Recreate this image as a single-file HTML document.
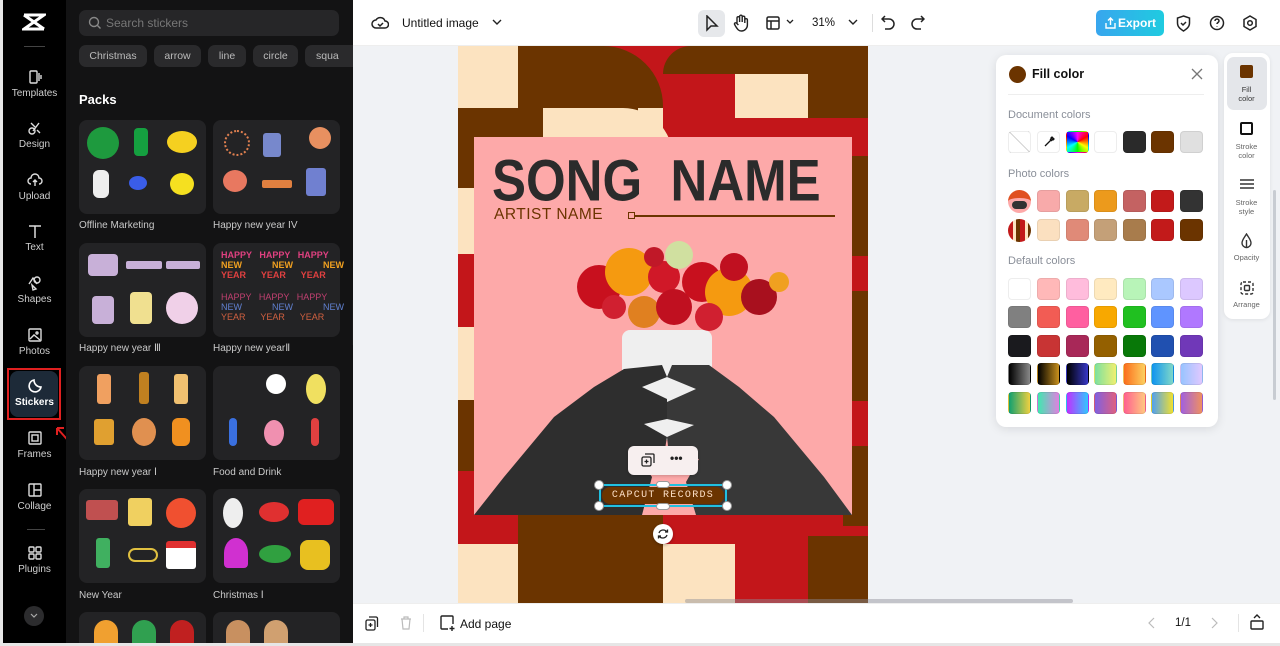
<!DOCTYPE html>
<html><head><meta charset="utf-8">
<style>
*{box-sizing:border-box;margin:0;padding:0}
html,body{width:1280px;height:646px;overflow:hidden}
body{background:#fff;font-family:"Liberation Sans",sans-serif;position:relative}
.a{position:absolute}
.rail{left:3px;top:0;width:63px;height:643px;background:#000}
.ri{position:absolute;left:0;width:63px;text-align:center;color:#cfcfcf;font-size:10px}
.ri svg{display:block;margin:0 auto 3px}
.panel{left:66px;top:0;width:287px;height:643px;background:#131314;overflow:hidden}
.chip{position:absolute;top:45px;height:22px;border-radius:7px;background:#2a2a2c;color:#bbb;font-size:10.5px;line-height:22px;text-align:center}
.card{position:absolute;width:127px;height:94px;border-radius:8px;background:#232325}
.lbl{position:absolute;color:#c9c9c9;font-size:10px}
.dot{position:absolute;border-radius:50%}
.sw{position:absolute;width:23px;height:22px;border-radius:4px;border:1px solid rgba(0,0,0,.07)}
.tt{position:absolute;color:#333;font-size:7.5px;text-align:center;width:45px;line-height:9px}
</style></head><body>
<div class="a" style="left:0;top:0;width:3px;height:646px;background:#e8e8e8"></div>
<div class="a rail">
  <svg class="a" style="left:19px;top:13px" width="24" height="18" viewBox="0 0 24 18"><path d="M2 2h20L2 16h20M2 2l20 14" stroke="#fff" stroke-width="3" fill="none"/></svg>
  <div class="a" style="left:21px;top:46px;width:21px;height:1px;background:#444"></div>
  <div class="ri" style="top:69px"><svg width="16" height="16" viewBox="0 0 16 16" fill="none" stroke="#ddd" stroke-width="1.4"><rect x="3" y="2" width="7" height="12" rx="1"/><path d="M12 4v8M14 6v4"/></svg>Templates</div>
  <div class="ri" style="top:120px"><svg width="16" height="16" viewBox="0 0 16 16" fill="none" stroke="#ddd" stroke-width="1.4"><circle cx="5" cy="11" r="3"/><path d="M4 3l4 4M12 3l-6 8M10 10l3 3"/></svg>Design</div>
  <div class="ri" style="top:172px"><svg width="16" height="16" viewBox="0 0 16 16" fill="none" stroke="#ddd" stroke-width="1.4"><path d="M4 12a3 3 0 010-6 4 4 0 018 0 3 3 0 010 6M8 8v6M6 10l2-2 2 2"/></svg>Upload</div>
  <div class="ri" style="top:223px"><svg width="16" height="16" viewBox="0 0 16 16" fill="none" stroke="#ddd" stroke-width="1.5"><path d="M2 3h12M8 3v12"/></svg>Text</div>
  <div class="ri" style="top:275px"><svg width="16" height="16" viewBox="0 0 16 16" fill="none" stroke="#ddd" stroke-width="1.4"><circle cx="10" cy="5" r="3"/><path d="M2 9l4-6 4 6M5 10l4 4-3 1z"/></svg>Shapes</div>
  <div class="ri" style="top:327px"><svg width="16" height="16" viewBox="0 0 16 16" fill="none" stroke="#ddd" stroke-width="1.4"><rect x="2" y="2" width="12" height="12" rx="1"/><path d="M3 12l4-4 6 5"/><circle cx="10" cy="6" r="1"/></svg>Photos</div>
  <div class="a" style="left:4px;top:368px;width:54px;height:52px;border:2px solid #e02020"></div>
  <div class="a" style="left:7px;top:371px;width:48px;height:46px;border-radius:8px;background:#1d2a38"></div>
  <div class="ri" style="top:378px;color:#fff;font-weight:bold"><svg width="16" height="16" viewBox="0 0 16 16" fill="none" stroke="#fff" stroke-width="1.6"><path d="M14 9a6 6 0 11-7-7c0 4 3 7 7 7z"/></svg>Stickers</div>
  <div class="ri" style="top:430px"><svg width="16" height="16" viewBox="0 0 16 16" fill="none" stroke="#ddd" stroke-width="1.4"><rect x="2" y="2" width="12" height="12" rx="1"/><rect x="5" y="5" width="6" height="6"/></svg>Frames</div>
  <div class="ri" style="top:482px"><svg width="16" height="16" viewBox="0 0 16 16" fill="none" stroke="#ddd" stroke-width="1.4"><rect x="2" y="2" width="12" height="12" rx="1"/><path d="M7 2v12M7 8h7"/></svg>Collage</div>
  <div class="a" style="left:24px;top:529px;width:18px;height:1px;background:#444"></div>
  <div class="ri" style="top:545px"><svg width="16" height="16" viewBox="0 0 16 16" fill="none" stroke="#ddd" stroke-width="1.4"><rect x="2" y="2" width="5" height="5" rx="1"/><rect x="9" y="2" width="5" height="5" rx="1"/><rect x="2" y="9" width="5" height="5" rx="1"/><rect x="9" y="9" width="5" height="5" rx="1"/></svg>Plugins</div>
  <div class="a" style="left:21px;top:606px;width:20px;height:20px;border-radius:50%;background:#2c2c2e"></div>
  <svg class="a" style="left:26px;top:612px" width="10" height="8"><path d="M2 2l3 3 3-3" stroke="#aaa" fill="none" stroke-width="1.2"/></svg>
  <svg class="a" style="left:50px;top:424px" width="22" height="24"><path d="M20 22L4 4M4 4v7M4 4h7" stroke="#e02020" stroke-width="2" fill="none"/></svg>
</div>
<div class="a panel">
  <div class="a" style="left:13px;top:10px;width:260px;height:26px;border-radius:7px;background:#262628"></div>
  <svg class="a" style="left:22px;top:16px" width="14" height="14" fill="none" stroke="#888" stroke-width="1.4"><circle cx="6" cy="6" r="4.5"/><path d="M9.5 9.5l3 3"/></svg>
  <div class="a" style="left:40px;top:16px;color:#777;font-size:12px">Search stickers</div>
  <div class="chip" style="left:13px;width:68px">Christmas</div>
  <div class="chip" style="left:88px;width:47px">arrow</div>
  <div class="chip" style="left:142px;width:38px">line</div>
  <div class="chip" style="left:187px;width:45px">circle</div>
  <div class="chip" style="left:239px;width:48px;text-align:left;padding-left:11px;border-radius:7px 0 0 7px">squa</div>
  <div class="a" style="left:13px;top:92px;color:#fff;font-size:13px;font-weight:bold">Packs</div>
  <div class="card" style="left:13px;top:120px"></div><div class="card" style="left:147px;top:120px"></div>
  <div class="lbl" style="left:13px;top:220px">Offline Marketing</div><div class="lbl" style="left:147px;top:220px">Happy new year IV</div>
  <div class="card" style="left:13px;top:243px"></div><div class="card" style="left:147px;top:243px"></div>
  <div class="lbl" style="left:13px;top:343px">Happy new year Ⅲ</div><div class="lbl" style="left:147px;top:343px">Happy new yearⅡ</div>
  <div class="card" style="left:13px;top:366px"></div><div class="card" style="left:147px;top:366px"></div>
  <div class="lbl" style="left:13px;top:467px">Happy new year Ⅰ</div><div class="lbl" style="left:147px;top:467px">Food and Drink</div>
  <div class="card" style="left:13px;top:489px"></div><div class="card" style="left:147px;top:489px"></div>
  <div class="lbl" style="left:13px;top:590px">New Year</div><div class="lbl" style="left:147px;top:590px">Christmas Ⅰ</div>
  <div class="card" style="left:13px;top:612px;height:31px;border-radius:8px 8px 0 0"></div><div class="card" style="left:147px;top:612px;height:31px;border-radius:8px 8px 0 0"></div>
  <div class="dot" style="left:21px;top:127px;width:32px;height:32px;background:#1e9a3e"></div>
  <div class="dot" style="left:68px;top:128px;width:14px;height:28px;background:#15a040;border-radius:4px"></div>
  <div class="dot" style="left:101px;top:131px;width:30px;height:22px;background:#f5d020"></div>
  <div class="dot" style="left:27px;top:170px;width:16px;height:28px;background:#eee;border-radius:6px"></div>
  <div class="dot" style="left:63px;top:176px;width:18px;height:14px;background:#3a5de8"></div>
  <div class="dot" style="left:104px;top:173px;width:24px;height:22px;background:#f5e020"></div>
  <div class="dot" style="left:158px;top:130px;width:26px;height:26px;background:none;border:2px dotted #e08050"></div>
  <div class="dot" style="left:197px;top:133px;width:18px;height:24px;background:#7788cc;border-radius:3px"></div>
  <div class="dot" style="left:243px;top:127px;width:22px;height:22px;background:#e89060"></div>
  <div class="dot" style="left:157px;top:170px;width:24px;height:22px;background:#e87860"></div>
  <div class="dot" style="left:196px;top:180px;width:30px;height:8px;background:#e08040;border-radius:2px"></div>
  <div class="dot" style="left:240px;top:168px;width:20px;height:28px;background:#7080d0;border-radius:3px"></div>
  <div class="dot" style="left:22px;top:254px;width:30px;height:22px;background:#c8b0d8;border-radius:4px"></div>
  <div class="dot" style="left:60px;top:261px;width:36px;height:8px;background:#c8b0d8;border-radius:2px"></div>
  <div class="dot" style="left:100px;top:261px;width:34px;height:8px;background:#c8b0d8;border-radius:2px"></div>
  <div class="dot" style="left:26px;top:296px;width:22px;height:28px;background:#c8b0d8;border-radius:4px"></div>
  <div class="dot" style="left:64px;top:292px;width:22px;height:32px;background:#f0e090;border-radius:4px"></div>
  <div class="dot" style="left:100px;top:292px;width:32px;height:32px;background:#f0d0e8"></div>
  <div class="a" style="left:155px;top:250px;width:116px;color:#e04080;font-size:9px;font-weight:bold;line-height:10px;word-spacing:5px;white-space:nowrap">HAPPY HAPPY HAPPY<br><span style="color:#f0a020">NEW&nbsp;&nbsp;&nbsp; NEW&nbsp;&nbsp;&nbsp; NEW</span><br><span style="color:#e04040">YEAR&nbsp; YEAR&nbsp; YEAR</span></div>
  <div class="a" style="left:155px;top:292px;width:116px;color:#c04070;font-size:9px;line-height:10px;word-spacing:5px;white-space:nowrap">HAPPY HAPPY HAPPY<br><span style="color:#6080d0">NEW&nbsp;&nbsp;&nbsp; NEW&nbsp;&nbsp;&nbsp; NEW</span><br><span style="color:#d06040">YEAR&nbsp; YEAR&nbsp; YEAR</span></div>
  <div class="dot" style="left:31px;top:374px;width:14px;height:30px;background:#f0a060;border-radius:3px"></div>
  <div class="dot" style="left:73px;top:372px;width:10px;height:32px;background:#c08020;border-radius:3px"></div>
  <div class="dot" style="left:108px;top:374px;width:14px;height:30px;background:#f0c070;border-radius:3px"></div>
  <div class="dot" style="left:28px;top:419px;width:20px;height:26px;background:#e0a030;border-radius:3px"></div>
  <div class="dot" style="left:66px;top:418px;width:24px;height:28px;background:#e09050"></div>
  <div class="dot" style="left:106px;top:418px;width:18px;height:28px;background:#f09020;border-radius:6px"></div>
  <div class="dot" style="left:200px;top:374px;width:20px;height:20px;background:#fff"></div>
  <div class="dot" style="left:240px;top:374px;width:20px;height:30px;background:#f0e060"></div>
  <div class="dot" style="left:163px;top:418px;width:8px;height:28px;background:#3a70e0;border-radius:4px"></div>
  <div class="dot" style="left:198px;top:420px;width:20px;height:26px;background:#f090b0"></div>
  <div class="dot" style="left:245px;top:418px;width:8px;height:28px;background:#e04040;border-radius:4px"></div>
  <div class="dot" style="left:20px;top:500px;width:32px;height:20px;background:#c05050;border-radius:3px"></div>
  <div class="dot" style="left:62px;top:498px;width:24px;height:28px;background:#f0d060;border-radius:3px"></div>
  <div class="dot" style="left:100px;top:498px;width:30px;height:30px;background:#f05030"></div>
  <div class="dot" style="left:30px;top:538px;width:14px;height:30px;background:#40b060;border-radius:3px"></div>
  <div class="dot" style="left:62px;top:548px;width:30px;height:14px;background:none;border:2px solid #e0c040;border-radius:8px"></div>
  <div class="dot" style="left:100px;top:541px;width:30px;height:28px;background:#fff;border-radius:3px;border-top:7px solid #e03030"></div>
  <div class="dot" style="left:157px;top:498px;width:20px;height:30px;background:#eee"></div>
  <div class="dot" style="left:193px;top:502px;width:30px;height:20px;background:#e03030"></div>
  <div class="dot" style="left:232px;top:499px;width:36px;height:26px;background:#e02020;border-radius:6px"></div>
  <div class="dot" style="left:158px;top:538px;width:24px;height:30px;background:#d030d0;border-radius:50% 50% 4px 4px"></div>
  <div class="dot" style="left:193px;top:545px;width:32px;height:18px;background:#30a040"></div>
  <div class="dot" style="left:234px;top:540px;width:30px;height:30px;background:#e8c020;border-radius:8px"></div>
  <div class="dot" style="left:28px;top:620px;width:24px;height:23px;background:#f0a030;border-radius:12px 12px 0 0"></div>
  <div class="dot" style="left:66px;top:620px;width:24px;height:23px;background:#30a050;border-radius:12px 12px 0 0"></div>
  <div class="dot" style="left:104px;top:620px;width:24px;height:23px;background:#c02020;border-radius:12px 12px 0 0"></div>
  <div class="dot" style="left:160px;top:620px;width:24px;height:23px;background:#c89060;border-radius:12px 12px 0 0"></div>
  <div class="dot" style="left:198px;top:620px;width:24px;height:23px;background:#d0a070;border-radius:12px 12px 0 0"></div>
</div>
<div class="a" style="left:352px;top:300px;width:6px;height:45px;border-radius:0 4px 4px 0;background:#1a1a1a"></div>
<!-- workspace -->
<div class="a" style="left:353px;top:46px;width:927px;height:557px;background:#f0f2f5"></div>
<div class="a" style="left:353px;top:0;width:927px;height:46px;background:#fff;border-bottom:1px solid #eee"></div>
<svg class="a" style="left:371px;top:15px" width="18" height="16" fill="none" stroke="#222" stroke-width="1.5"><path d="M5 13a4 4 0 010-8 5 5 0 019 1 3.5 3.5 0 010 7z"/><path d="M7 9l2 2 3-3"/></svg>
<div class="a" style="left:402px;top:16px;font-size:12px;color:#111">Untitled image</div>
<svg class="a" style="left:492px;top:18px" width="10" height="8" fill="none" stroke="#222" stroke-width="1.4"><path d="M1 2l4 4 4-4"/></svg>
<div class="a" style="left:698px;top:10px;width:27px;height:27px;border-radius:6px;background:#e6e8eb"></div>
<svg class="a" style="left:705px;top:15px" width="14" height="17" fill="none" stroke="#222" stroke-width="1.5"><path d="M2 1v14l4-4h6z"/></svg>
<svg class="a" style="left:733px;top:14px" width="16" height="18" fill="none" stroke="#222" stroke-width="1.4"><path d="M4 10V4a1.3 1.3 0 012.6 0v4M6.6 8V2.5a1.3 1.3 0 012.6 0V8M9.2 8V3.5a1.3 1.3 0 012.6 0V9M11.8 9V6a1.3 1.3 0 012.6 0v5a6 6 0 01-6 6c-3 0-4-2-6-5l-1-2a1.3 1.3 0 012-1l2 2"/></svg>
<svg class="a" style="left:766px;top:16px" width="14" height="14" fill="none" stroke="#222" stroke-width="1.5"><rect x="1" y="1" width="12" height="12" rx="1.5"/><path d="M1 5h12M5 5v8"/></svg>
<svg class="a" style="left:786px;top:19px" width="8" height="6" fill="none" stroke="#222" stroke-width="1.3"><path d="M1 1l3 3 3-3"/></svg>
<div class="a" style="left:812px;top:17px;font-size:11.5px;color:#111">31%</div>
<svg class="a" style="left:848px;top:19px" width="10" height="7" fill="none" stroke="#222" stroke-width="1.4"><path d="M1 1l4 4 4-4"/></svg>
<div class="a" style="left:872px;top:14px;width:1px;height:18px;background:#ddd"></div>
<svg class="a" style="left:881px;top:15px" width="14" height="16" fill="none" stroke="#222" stroke-width="1.5"><path d="M4 1L1 4l3 3M1 4h7a5 5 0 010 10H4"/></svg>
<svg class="a" style="left:911px;top:15px" width="14" height="16" fill="none" stroke="#222" stroke-width="1.5"><path d="M10 1l3 3-3 3M13 4H6a5 5 0 000 10h4"/></svg>
<div class="a" style="left:1096px;top:10px;width:68px;height:26px;border-radius:5px;background:linear-gradient(90deg,#38a6ee,#1fcbe0);color:#fff;font-size:12px;font-weight:bold;line-height:26px;padding-left:22px">Export</div>
<svg class="a" style="left:1105px;top:17px" width="11" height="12" fill="none" stroke="#fff" stroke-width="1.4"><path d="M5.5 8V1M3 3.5l2.5-2.5 2.5 2.5M1 6v5h9V6"/></svg>
<svg class="a" style="left:1176px;top:15px" width="15" height="17" fill="none" stroke="#222" stroke-width="1.5"><path d="M7.5 1l6 2v5c0 4-3 6-6 8-3-2-6-4-6-8V3z"/><path d="M5 8l2 2 3-3"/></svg>
<svg class="a" style="left:1209px;top:15px" width="16" height="16" fill="none" stroke="#222" stroke-width="1.5"><circle cx="8" cy="8" r="6.5"/><path d="M6 6a2 2 0 114 0c0 1.5-2 1.5-2 3M8 11.5v.5"/></svg>
<svg class="a" style="left:1242px;top:15px" width="16" height="16" fill="none" stroke="#222" stroke-width="1.5"><path d="M8 1l6 3.5v7L8 15l-6-3.5v-7z"/><circle cx="8" cy="8" r="2.3"/></svg>
<!-- canvas -->
<div class="a" style="left:458px;top:46px;width:410px;height:557px;background:#c3161a;overflow:hidden">
  <div class="a" style="left:0;top:0;width:60px;height:62px;background:#fce3c0"></div>
  <div class="a" style="left:60px;top:0;width:145px;height:62px;background:#6b3400;border-radius:0 60px 0 0"></div>
  <div class="a" style="left:60px;top:62px;width:145px;height:30px;background:#fce3c0"></div>
  <div class="a" style="left:60px;top:62px;width:120px;height:30px;background:#6b3400"></div>
  <div class="a" style="left:85px;top:62px;width:130px;height:50px;background:#fce3c0;border-radius:0 55px 0 0"></div>
  <div class="a" style="left:0;top:62px;width:60px;height:80px;background:#6b3400"></div>
  <div class="a" style="left:0;top:142px;width:60px;height:66px;background:#fce3c0"></div>
  <div class="a" style="left:0;top:281px;width:60px;height:73px;background:#fce3c0"></div>
  <div class="a" style="left:0;top:354px;width:60px;height:71px;background:#6b3400"></div>
  <div class="a" style="left:205px;top:0;width:205px;height:28px;background:#6b3400;border-radius:40px 0 0 0"></div>
  <div class="a" style="left:277px;top:28px;width:73px;height:44px;background:#fce3c0"></div>
  <div class="a" style="left:350px;top:28px;width:60px;height:44px;background:#6b3400"></div>
  <div class="a" style="left:385px;top:110px;width:25px;height:100px;background:#6b3400"></div>
  <div class="a" style="left:385px;top:245px;width:25px;height:110px;background:#6b3400"></div>
  <div class="a" style="left:385px;top:400px;width:25px;height:80px;background:#6b3400"></div>
  <div class="a" style="left:0;top:498px;width:60px;height:59px;background:#fce3c0"></div>
  <div class="a" style="left:60px;top:469px;width:145px;height:88px;background:#6b3400"></div>
  <div class="a" style="left:205px;top:498px;width:72px;height:59px;background:#fce3c0"></div>
  <div class="a" style="left:350px;top:490px;width:60px;height:67px;background:#6b3400"></div>
</div>
<div class="a" style="left:474px;top:137px;width:378px;height:378px;background:#fda9a9;overflow:hidden">
  <div class="a" style="left:18px;top:14px;font-size:51px;font-weight:bold;color:#2b2b2b;letter-spacing:0;font-family:'Liberation Sans',sans-serif;transform:scaleY(1.15);transform-origin:left top;line-height:51px;white-space:nowrap">SONG&nbsp; NAME</div>
  <div class="a" style="left:20px;top:69px;font-size:15.5px;color:#6b3400;font-family:'Liberation Sans',sans-serif;letter-spacing:.5px">ARTIST NAME</div>
  <div class="a" style="left:154px;top:75px;width:7px;height:7px;border:1.5px solid #6b3400"></div>
  <div class="a" style="left:161px;top:78px;width:200px;height:2px;background:#6b3400"></div>
  <svg class="a" style="left:0;top:0" width="378" height="378">
    <rect x="148" y="193" width="90" height="110" rx="8" fill="#efefef"/>
    <g>
      <circle cx="125" cy="150" r="22" fill="#c8101e"/><circle cx="155" cy="135" r="24" fill="#f59a10"/>
      <circle cx="190" cy="140" r="16" fill="#d01828"/><circle cx="205" cy="118" r="14" fill="#d0e0a0"/>
      <circle cx="228" cy="145" r="20" fill="#c8101e"/><circle cx="255" cy="155" r="24" fill="#f59a10"/>
      <circle cx="285" cy="160" r="18" fill="#a8101e"/><circle cx="170" cy="175" r="16" fill="#e08020"/>
      <circle cx="200" cy="170" r="18" fill="#c01020"/><circle cx="235" cy="180" r="14" fill="#d02030"/>
      <circle cx="260" cy="130" r="14" fill="#c01020"/><circle cx="140" cy="170" r="12" fill="#d02030"/>
      <circle cx="305" cy="145" r="10" fill="#f0a020"/><circle cx="180" cy="120" r="10" fill="#c01828"/>
    </g>
    <path d="M0 378L30 340 80 280 120 250 150 232 188 228 193 240 168 250 193 262 193 282 170 287 193 300 190 318 165 322 178 340 168 378Z" fill="#2e2e2e"/>
    <path d="M378 378L350 340 300 280 265 250 235 228 198 228 193 240 222 252 193 265 193 282 220 288 193 300 195 318 225 322 212 345 222 378Z" fill="#383838"/>
  </svg>
</div>
<div class="a" style="left:628px;top:446px;width:70px;height:29px;border-radius:6px;background:#f7efef;box-shadow:0 1px 3px rgba(0,0,0,.2)"></div>
<svg class="a" style="left:641px;top:453px" width="14" height="14" fill="none" stroke="#222" stroke-width="1.3"><rect x="1" y="4" width="9" height="9" rx="1.5"/><path d="M4 1h8a1 1 0 011 1v8M5.5 6.5v4M3.5 8.5h4"/></svg>
<div class="a" style="left:670px;top:451px;font-size:12px;font-weight:bold;color:#222">•••</div>
<div class="a" style="left:599px;top:484px;width:128px;height:23px;border:2px solid #21c0e0"></div>
<div class="a" style="left:602px;top:487px;width:122px;height:17px;border-radius:8px;background:#6b3400;color:#fde0c8;font-size:10px;text-align:center;line-height:17px;letter-spacing:1.3px;font-family:'Liberation Mono',monospace">CAPCUT RECORDS</div>
<div class="dot" style="left:594px;top:480px;width:10px;height:10px;background:#fff;border:1px solid #999"></div>
<div class="dot" style="left:722px;top:480px;width:10px;height:10px;background:#fff;border:1px solid #999"></div>
<div class="dot" style="left:594px;top:501px;width:10px;height:10px;background:#fff;border:1px solid #999"></div>
<div class="dot" style="left:722px;top:501px;width:10px;height:10px;background:#fff;border:1px solid #999"></div>
<div class="a" style="left:656px;top:481px;width:14px;height:7px;border-radius:4px;background:#fff;border:1px solid #999"></div>
<div class="a" style="left:656px;top:503px;width:14px;height:7px;border-radius:4px;background:#fff;border:1px solid #999"></div>
<div class="dot" style="left:653px;top:524px;width:20px;height:20px;background:#fff;box-shadow:0 1px 3px rgba(0,0,0,.3)"></div>
<svg class="a" style="left:657px;top:528px" width="12" height="12" fill="none" stroke="#222" stroke-width="1.3"><path d="M10 4a4.5 4.5 0 00-8 1M2 8a4.5 4.5 0 008-1M8 4h2.5V1.5M4 8H1.5v2.5"/></svg>
<div class="a" style="left:685px;top:599px;width:388px;height:4px;border-radius:2px;background:rgba(140,140,150,.45)"></div>
<!-- fill color popup -->
<div class="a" style="left:996px;top:55px;width:222px;height:372px;border-radius:10px;background:#fff;box-shadow:0 2px 10px rgba(0,0,0,.1)"></div>
<div class="dot" style="left:1009px;top:66px;width:17px;height:17px;background:#6b3400"></div>
<div class="a" style="left:1032px;top:67px;font-size:12.5px;font-weight:bold;color:#111">Fill color</div>
<svg class="a" style="left:1191px;top:68px" width="12" height="12" stroke="#777" stroke-width="1.3"><path d="M1 1l10 10M11 1L1 11"/></svg>
<div class="a" style="left:1008px;top:94px;width:196px;height:1px;background:#eee"></div>
<div class="a" style="left:1008px;top:109px;font-size:11px;color:#8a8f99">Document colors</div>
<div class="a" style="left:1008px;top:168px;font-size:11px;color:#8a8f99">Photo colors</div>
<div class="a" style="left:1008px;top:255px;font-size:11px;color:#8a8f99">Default colors</div>
<div class="sw" style="left:1008px;top:131px;background:linear-gradient(45deg,#fff 48%,#ccc 49%,#ccc 51%,#fff 52%)"></div>
<div class="sw" style="left:1037px;top:131px;background:#fff"></div>
<svg class="a" style="left:1043px;top:136px" width="12" height="12" fill="none" stroke="#111" stroke-width="1.3"><path d="M2 10l6-6M7 3l2 2M8 2l2 2 1-1-2-2z"/></svg>
<div class="sw" style="left:1066px;top:131px;background:conic-gradient(#f0f,#f00,#ff0,#0f0,#0ff,#00f,#f0f)"></div>
<div class="sw" style="left:1094px;top:131px;background:#fff"></div>
<div class="sw" style="left:1123px;top:131px;background:#2a2a2a"></div>
<div class="sw" style="left:1151px;top:131px;background:#6b3400"></div>
<div class="sw" style="left:1180px;top:131px;background:#e0e0e0"></div>
<div class="dot" style="left:1008px;top:190px;width:23px;height:23px;background:#fda9a9;border-top:8px solid #e05020"></div>
<div class="dot" style="left:1012px;top:201px;width:15px;height:8px;background:#333;border-radius:4px"></div>
<div class="sw" style="left:1037px;top:190px;background:#f8aaaa"></div>
<div class="sw" style="left:1066px;top:190px;background:#c8aa64"></div>
<div class="sw" style="left:1094px;top:190px;background:#ec9a1c"></div>
<div class="sw" style="left:1123px;top:190px;background:#c46262"></div>
<div class="sw" style="left:1151px;top:190px;background:#c21a1a"></div>
<div class="sw" style="left:1180px;top:190px;background:#333"></div>
<div class="dot" style="left:1008px;top:219px;width:23px;height:23px;background:repeating-linear-gradient(90deg,#c21a1a 0 5px,#fce3c0 5px 8px,#6b3400 8px 12px)"></div>
<div class="sw" style="left:1037px;top:219px;background:#fbe0c0"></div>
<div class="sw" style="left:1066px;top:219px;background:#e08a78"></div>
<div class="sw" style="left:1094px;top:219px;background:#c4a078"></div>
<div class="sw" style="left:1123px;top:219px;background:#a87c4c"></div>
<div class="sw" style="left:1151px;top:219px;background:#c21a1a"></div>
<div class="sw" style="left:1180px;top:219px;background:#6b3400"></div>
<div class="sw" style="left:1008px;top:278px;background:#fff"></div>
<div class="sw" style="left:1037px;top:278px;background:#ffb8b8"></div>
<div class="sw" style="left:1066px;top:278px;background:#ffbcdc"></div>
<div class="sw" style="left:1094px;top:278px;background:#ffeac0"></div>
<div class="sw" style="left:1123px;top:278px;background:#b8f4b8"></div>
<div class="sw" style="left:1151px;top:278px;background:#aac8ff"></div>
<div class="sw" style="left:1180px;top:278px;background:#dcc8ff"></div>
<div class="sw" style="left:1008px;top:306px;background:#808080"></div>
<div class="sw" style="left:1037px;top:306px;background:#f25c54"></div>
<div class="sw" style="left:1066px;top:306px;background:#ff5fa0"></div>
<div class="sw" style="left:1094px;top:306px;background:#f8a800"></div>
<div class="sw" style="left:1123px;top:306px;background:#20c020"></div>
<div class="sw" style="left:1151px;top:306px;background:#5f94ff"></div>
<div class="sw" style="left:1180px;top:306px;background:#b078ff"></div>
<div class="sw" style="left:1008px;top:335px;background:#1a1a1e"></div>
<div class="sw" style="left:1037px;top:335px;background:#c83434"></div>
<div class="sw" style="left:1066px;top:335px;background:#a82858"></div>
<div class="sw" style="left:1094px;top:335px;background:#946000"></div>
<div class="sw" style="left:1123px;top:335px;background:#087808"></div>
<div class="sw" style="left:1151px;top:335px;background:#2050b0"></div>
<div class="sw" style="left:1180px;top:335px;background:#7038b8"></div>
<div class="sw" style="left:1008px;top:363px;background:linear-gradient(90deg,#000,#888)"></div>
<div class="sw" style="left:1037px;top:363px;background:linear-gradient(90deg,#000,#c8901c)"></div>
<div class="sw" style="left:1066px;top:363px;background:linear-gradient(90deg,#000,#3838c8)"></div>
<div class="sw" style="left:1094px;top:363px;background:linear-gradient(90deg,#7ce0a0,#f0f070)"></div>
<div class="sw" style="left:1123px;top:363px;background:linear-gradient(90deg,#fb6e1c,#fcd060)"></div>
<div class="sw" style="left:1151px;top:363px;background:linear-gradient(90deg,#1094f0,#80d8c8)"></div>
<div class="sw" style="left:1180px;top:363px;background:linear-gradient(90deg,#98c4ff,#e0c8ff)"></div>
<div class="sw" style="left:1008px;top:392px;background:linear-gradient(90deg,#10a070,#f0d040)"></div>
<div class="sw" style="left:1037px;top:392px;background:linear-gradient(90deg,#40e8b0,#e080e0)"></div>
<div class="sw" style="left:1066px;top:392px;background:linear-gradient(90deg,#c030ff,#30c8ff)"></div>
<div class="sw" style="left:1094px;top:392px;background:linear-gradient(90deg,#8060e0,#e06080)"></div>
<div class="sw" style="left:1123px;top:392px;background:linear-gradient(90deg,#ff6090,#ffc880)"></div>
<div class="sw" style="left:1151px;top:392px;background:linear-gradient(90deg,#50a0f0,#f0e030)"></div>
<div class="sw" style="left:1180px;top:392px;background:linear-gradient(90deg,#a060e0,#f09060)"></div>
<!-- right tool strip -->
<div class="a" style="left:1224px;top:53px;width:46px;height:266px;border-radius:9px;background:#fff;box-shadow:0 1px 4px rgba(0,0,0,.08)"></div>
<div class="a" style="left:1227px;top:57px;width:40px;height:53px;border-radius:7px;background:#e4e6ea"></div>
<div class="a" style="left:1240px;top:65px;width:13px;height:13px;border-radius:2px;background:#6b3400"></div>
<div class="tt" style="left:1224px;top:85px">Fill<br>color</div>
<div class="a" style="left:1240px;top:122px;width:13px;height:13px;border:2.5px solid #111;border-radius:2px"></div>
<div class="tt" style="left:1224px;top:142px;color:#666">Stroke<br>color</div>
<svg class="a" style="left:1240px;top:178px" width="14" height="12" stroke="#333" stroke-width="1.6"><path d="M0 2h14M0 6h14M0 10h14"/></svg>
<div class="tt" style="left:1224px;top:198px;color:#666">Stroke<br>style</div>
<svg class="a" style="left:1240px;top:233px" width="13" height="16" fill="none" stroke="#333" stroke-width="1.4"><path d="M6.5 1C4 5 2 7 2 10a4.5 4.5 0 009 0c0-3-2-5-4.5-9z"/><path d="M6.5 7v7"/></svg>
<div class="tt" style="left:1224px;top:253px;color:#666">Opacity</div>
<svg class="a" style="left:1240px;top:281px" width="14" height="14" fill="none" stroke="#333" stroke-width="1.4"><rect x="1" y="1" width="12" height="12" rx="2" stroke-dasharray="3 2"/><rect x="4.5" y="4.5" width="5" height="5" rx="1"/></svg>
<div class="tt" style="left:1224px;top:300px;color:#666">Arrange</div>
<div class="a" style="left:1273px;top:190px;width:3px;height:210px;border-radius:2px;background:#c8ccd2"></div>
<!-- bottom bar -->
<div class="a" style="left:353px;top:603px;width:927px;height:40px;background:#fff;border-top:1px solid #eee"></div>
<div class="a" style="left:0;top:643px;width:1280px;height:3px;background:#e6e6e6"></div>
<svg class="a" style="left:365px;top:616px" width="14" height="15" fill="none" stroke="#222" stroke-width="1.3"><rect x="1" y="4" width="9" height="10" rx="1.5"/><path d="M4 1h7a1.5 1.5 0 011.5 1.5V11M5.5 7v4M3.5 9h4"/></svg>
<svg class="a" style="left:400px;top:616px" width="12" height="14" fill="none" stroke="#bbb" stroke-width="1.2"><path d="M1 3h10M4 3V1h4v2M2 3l1 10h6l1-10"/></svg>
<div class="a" style="left:423px;top:614px;width:1px;height:18px;background:#e4e4e4"></div>
<svg class="a" style="left:440px;top:615px" width="15" height="17" fill="none" stroke="#222" stroke-width="1.4"><path d="M8 14H2a1 1 0 01-1-1V2a1 1 0 011-1h10a1 1 0 011 1v7M12 11v5M9.5 13.5h5"/></svg>
<div class="a" style="left:460px;top:617px;font-size:12px;color:#111">Add page</div>
<svg class="a" style="left:1148px;top:617px" width="8" height="12" fill="none" stroke="#bbb" stroke-width="1.2"><path d="M6 1L1 6l5 5"/></svg>
<div class="a" style="left:1175px;top:617px;font-size:11.5px;color:#111">1/1</div>
<svg class="a" style="left:1210px;top:617px" width="8" height="12" fill="none" stroke="#bbb" stroke-width="1.2"><path d="M2 1l5 5-5 5"/></svg>
<div class="a" style="left:1238px;top:614px;width:1px;height:18px;background:#e4e4e4"></div>
<svg class="a" style="left:1250px;top:614px" width="14" height="17" fill="none" stroke="#222" stroke-width="1.4"><rect x="1" y="7" width="12" height="8" rx="1"/><path d="M4 4l3-3 3 3"/></svg>
</body></html>
